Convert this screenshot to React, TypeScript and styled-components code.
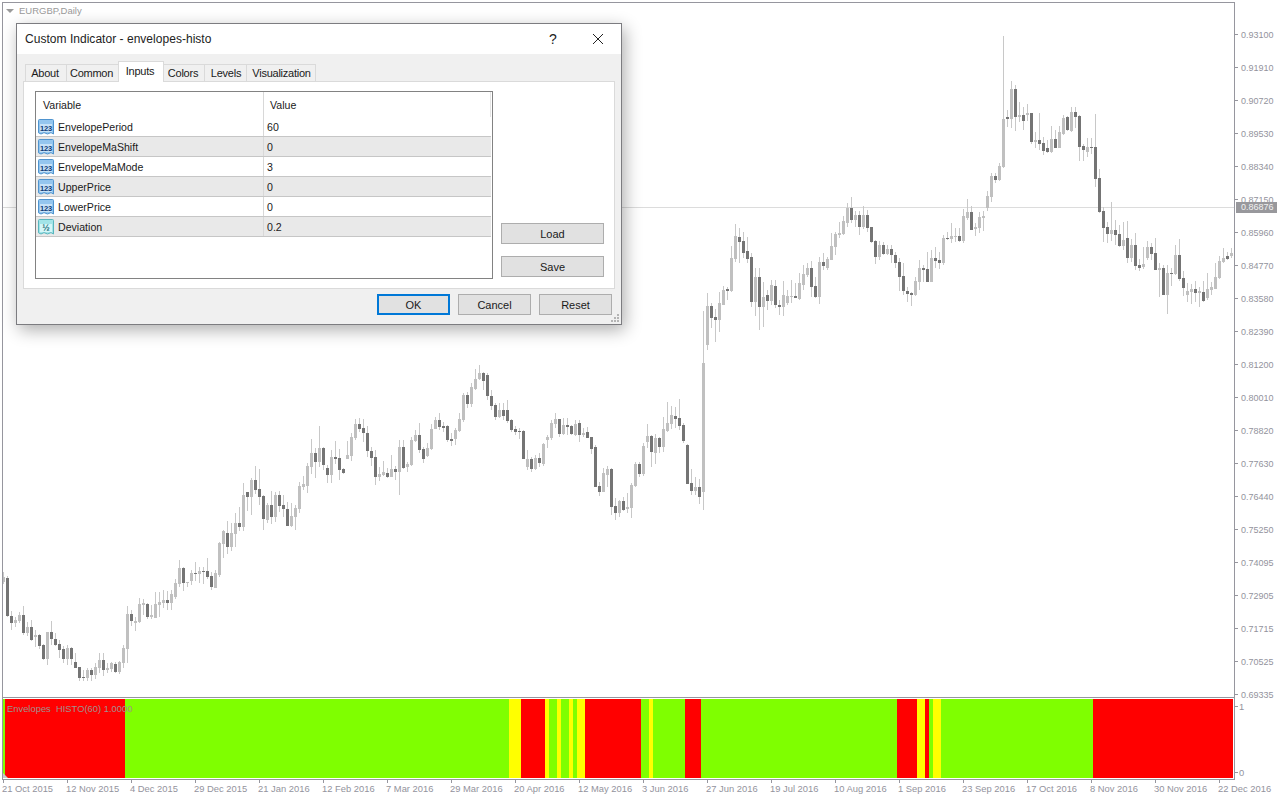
import React from "react";
import styled, { createGlobalStyle } from "styled-components";

const Global = createGlobalStyle`
  html, body { margin: 0; padding: 0; background: #fff; }
  body { font-family: "Liberation Sans", Arial, sans-serif; overflow: hidden; }
`;

type C = [number, number, number, number, number];

const segA: C[] = [
[0,697,732,710,725],[1,708,832,714,828],[1,812,870,828,849],[0,832,860,840,849],[0,815,850,825,843],[1,798,885,825,879],[0,845,888,861,879],[1,840,903,861,900],[0,870,920,885,891],[1,882,927,885,918],
[1,912,960,915,957],[0,875,975,876,957],[1,842,915,876,897],[1,880,918,897,915],[1,900,955,912,930],[1,918,970,927,957],[0,915,975,924,957],[1,920,975,924,957],[1,938,985,966,984],[1,980,1022,981,1014],
[1,990,1022,1011,1014],[0,985,1022,990,1014],[1,985,1022,990,1005],[0,970,1018,981,1005],[0,938,1000,960,984],[1,938,1008,960,990],[0,970,1000,984,990],[0,966,995,969,987],[1,965,1000,972,996],[0,963,1002,966,996],
[0,915,985,924,969],[0,798,968,822,927],[1,810,858,822,843],[0,830,872,843,849],[0,775,848,792,846],[0,777,825,789,795],[1,788,838,792,831],[0,795,838,825,831],[0,756,835,792,834],[0,755,832,786,795],
[0,750,805,780,789],[1,752,810,780,789],[0,750,810,762,789],[0,718,778,729,771],[0,660,742,684,732],[1,682,752,684,729],[0,725,742,726,729],[0,690,735,699,723],[1,666,722,699,702],[0,682,730,693,702],
[1,682,732,693,696],[1,654,718,693,711],[1,695,750,708,741],[0,690,745,699,744],[0,605,710,609,705],[0,570,655,573,612],[1,544,642,579,621],[0,548,632,579,621],[0,520,622,549,582],[1,500,574,549,561],
[0,430,572,465,561],[1,455,512,456,471],[0,415,525,420,471],[1,378,462,420,450],[1,388,495,447,471],[1,465,570,468,537],[0,490,550,495,540],[1,453,552,495,531],[0,455,545,465,531],[1,453,516,465,498],
[1,465,530,495,507],[1,487,558,507,558],[0,490,560,528,558],[0,495,570,504,531],[0,425,520,438,507],[0,408,450,432,441],[0,370,458,378,438],[0,297,402,339,381],[1,325,415,339,366],[0,258,380,324,366],
[1,320,390,324,375],[1,375,430,384,405],[0,330,430,351,405],[1,303,372,351,357],[1,328,420,354,390],[1,385,402,387,399],[0,303,358,345,357],[0,280,362,291,348],[0,237,300,252,294],[1,235,275,252,267],
[1,237,305,264,279],[1,258,350,279,333],[1,322,378,333,354],[1,330,435,351,411],[0,380,423,402,411],[0,362,408,396,405],[1,385,415,399,411],[0,345,412,387,411],[1,378,420,387,396],[0,300,465,321,396],
[1,300,388,321,384],[0,365,395,372,381],[0,290,378,300,375],[0,270,305,285,303],[1,250,340,285,330],[1,320,368,327,357],[0,310,352,324,348],[0,252,330,267,327],[0,230,268,240,267],[1,220,270,240,261],
[1,245,275,258,264],[1,255,305,258,300],[1,278,318,297,303],[0,265,315,270,297],[0,220,275,237,273],[0,158,245,165,240],[1,155,205,165,192],[0,130,200,141,192],[0,86,150,117,147],[0,75,120,99,117],
[1,95,150,99,123],[1,100,180,105,168],[1,150,210,168,198],[1,190,240,195,231],[0,190,235,210,231],[1,190,240,210,228],[1,180,248,210,243],[1,238,275,240,270],[1,258,285,267,276],[1,265,298,273,276],
[1,270,358,273,357],[0,330,390,357,381],[1,352,395,357,387],[0,345,390,354,387],[1,340,380,354,369],[0,310,378,312,372],[0,285,325,291,300],[0,240,300,249,294],[0,220,265,237,252],[1,237,290,237,282],
[0,235,285,255,282],[1,235,285,255,261],[1,255,285,258,282],[0,240,288,252,285],[1,240,305,249,285],[0,265,290,279,285],[1,262,295,276,294],[1,290,342,291,327],[1,315,442,321,441],[1,425,468,438,456],
[0,385,456,399,456],[0,378,440,387,405],[1,385,525,387,501],[1,475,540,498,519],[0,480,530,483,519],[1,472,512,483,510],[0,460,520,501,507],[0,428,535,435,504],[0,365,440,372,438],[1,365,410,372,402],
[0,310,408,318,402],[0,252,325,288,306],[1,285,380,288,336],[0,282,372,294,339],[1,290,338,294,321],[0,232,335,267,321],[0,185,275,249,273],[0,198,268,225,252],[1,200,265,228,237],[1,178,270,234,258],
[1,250,308,255,303],[1,312,432,315,432],[1,388,465,429,453],[0,412,465,441,453],[1,418,492,441,471],[0,-87,510,69,456],
];

const segB: C[] = [
[0,310,480,348,465],[1,340,415,348,384],[1,358,455,381,390],[0,305,425,339,390],[0,288,345,300,345],[1,290,330,297,303],[0,168,305,204,303],[0,102,215,138,207],[1,115,218,141,156],[1,125,205,153,189],
[1,140,220,183,207],[1,190,350,201,336],[0,235,378,261,336],[1,235,420,261,351],[0,275,410,321,351],[1,300,360,315,333],[0,270,345,285,333],[1,270,355,288,345],[1,330,375,345,351],[0,272,378,315,351],
[0,300,345,318,339],[0,270,340,318,321],[1,280,325,318,324],[0,250,330,279,327],[0,225,300,252,285],[0,220,260,234,255],[1,212,320,234,291],[1,260,325,288,321],[0,200,342,216,321],[1,190,240,216,228],
[0,200,240,207,234],[0,130,210,168,210],[0,125,195,132,171],[0,95,145,129,135],[0,78,135,93,132],[0,40,110,54,99],[1,20,100,54,90],[0,62,110,75,90],[1,62,135,75,111],[0,48,118,75,111],
[1,60,125,75,114],[1,110,160,111,156],[1,150,222,153,201],[0,153,210,165,201],[1,155,195,165,192],[0,165,195,177,192],[1,165,218,177,195],[1,185,235,195,219],[1,205,302,216,261],[1,220,315,258,303],
[1,290,335,303,312],[1,305,348,309,315],[0,262,318,273,315],[0,210,300,234,276],[1,225,275,234,240],[1,185,275,237,276],[0,180,275,204,276],[1,170,235,204,213],[1,185,238,210,219],[0,135,225,144,219],
[1,125,150,144,147],[0,98,158,138,147],[0,115,155,138,141],[1,115,155,138,153],
];

const segC: C[] = [
[0,628,728,648,723],[0,597,660,636,654],[1,617,690,636,690],[0,670,708,681,687],[0,635,700,651,684],[0,632,692,648,654],[0,572,632,588,624],[0,518,605,528,591],[1,520,548,528,540],[0,488,543,498,540],
[0,108,505,357,501],[1,330,380,351,357],[0,243,385,267,357],[1,255,392,267,351],[0,305,365,345,351],[1,322,390,345,363],[0,312,362,339,345],[1,338,432,339,426],[0,395,445,420,426],[1,338,450,420,432],
[1,410,465,429,453],[1,420,460,444,456],[0,378,458,417,456],[1,390,445,417,444],[0,378,445,396,444],[0,345,405,354,402],[1,348,392,351,390],[0,322,395,336,393],[1,320,385,336,351],[1,345,483,348,441],
[1,432,483,438,450],[0,415,470,441,456],[1,415,462,441,444],[1,342,560,441,537],[1,508,640,534,636],[1,622,725,633,684],[1,665,730,681,702],[0,605,722,690,702],[1,660,735,690,705],[1,675,740,702,738],
[0,665,750,720,738],[1,664,790,714,774],[0,718,785,735,774],[1,698,810,735,798],[1,778,812,795,804],[0,740,808,792,801],[0,722,780,741,774],[1,728,780,741,762],[1,715,810,759,810],[0,790,890,804,810],
[1,795,885,804,885],[0,795,942,819,885],[1,805,858,819,822],[0,735,825,765,822],[1,718,842,765,837],[1,812,888,834,864],[0,850,905,873,885],[0,852,912,867,876],[1,842,905,867,879],[0,860,920,873,879],
[1,842,905,876,903],[0,820,900,867,894],[0,845,885,861,870],[0,790,868,831,867],[0,768,838,783,834],[0,745,790,774,786],[1,755,780,768,777],[0,745,775,759,768],
];

type Placed = { x: number; dark: boolean; wt: number; wb: number; bt: number; bb: number };
const place = (seg: C[], startX: number, baseY: number): Placed[] =>
  seg.map(([d, wt, wb, bt, bb], i) => ({
    x: startX + i * 4,
    dark: !!d,
    wt: Math.round(baseY + wt / 3),
    wb: Math.round(baseY + wb / 3),
    bt: Math.round(baseY + bt / 3),
    bb: Math.round(baseY + bb / 3),
  }));

const candles: Placed[] = [...place(segA, 3, 340), ...place(segB, 707, 190), ...place(segC, 963, 0)];

const prices = ["0.93100","0.91910","0.90720","0.89530","0.88340","0.87150","0.85960","0.84770","0.83580","0.82390","0.81200","0.80010","0.78820","0.77630","0.76440","0.75250","0.74095","0.72905","0.71715","0.70525","0.69335"];
const dates = ["21 Oct 2015","12 Nov 2015","4 Dec 2015","29 Dec 2015","21 Jan 2016","12 Feb 2016","7 Mar 2016","29 Mar 2016","20 Apr 2016","12 May 2016","3 Jun 2016","27 Jun 2016","19 Jul 2016","10 Aug 2016","1 Sep 2016","23 Sep 2016","17 Oct 2016","8 Nov 2016","30 Nov 2016","22 Dec 2016"];

const G = "#7fff00", R = "#ff0000", Y = "#ffff00";
const hist: [string, number][] = [[G,2],[R,120],[G,384],[Y,12],[R,24],[Y,4],[G,8],[Y,4],[G,8],[Y,4],[G,4],[Y,8],[R,56],[G,8],[Y,4],[G,32],[R,16],[G,196],[R,20],[Y,8],[R,4],[G,4],[Y,8],[G,152],[R,140]];

const inputs = [
  { name: "EnvelopePeriod", value: "60", real: false },
  { name: "EnvelopeMaShift", value: "0", real: false },
  { name: "EnvelopeMaMode", value: "3", real: false },
  { name: "UpperPrice", value: "0", real: false },
  { name: "LowerPrice", value: "0", real: false },
  { name: "Deviation", value: "0.2", real: true },
];
const tabs = ["About", "Common", "Inputs", "Colors", "Levels", "Visualization"];

const Page = styled.div`
  position: relative;
  width: 1280px;
  height: 800px;
  padding: 2px 0 0 2px;
  box-sizing: border-box;
  overflow: hidden;
  background: #fff;
  font-size: 9.4px;
  color: #93939d;
`;
const PaneRow = styled.div`
  display: flex;
`;
const MainPane = styled.div`
  position: relative;
  box-sizing: border-box;
  width: 1233px;
  height: 696px;
  border: 1px solid #96969e;
  background: #fff;
`;
const ChartSvg = styled.svg`
  display: block;
`;
const ChartTitle = styled.div`
  position: absolute;
  left: 3px;
  top: 2px;
  display: flex;
  align-items: center;
  gap: 5px;
  line-height: 11px;
  font-size: 9.5px;
  color: #9a9a9a;
`;
const Caret = styled.span`
  width: 0;
  height: 0;
  border-left: 4px solid transparent;
  border-right: 4px solid transparent;
  border-top: 4px solid #9a9a9a;
`;
const PriceAxis = styled.div`
  position: relative;
  width: 45px;
  height: 696px;
  padding-top: 16px;
  box-sizing: border-box;
  font-size: 9px;
`;
const PriceRow = styled.div`
  display: flex;
  align-items: center;
  height: 33px;
  gap: 3px;
  white-space: nowrap;
`;
const Tick = styled.span`
  width: 3px;
  height: 1px;
  background: #96969e;
`;
const PriceTag = styled.div`
  position: absolute;
  left: 1px;
  top: 200px;
  width: 41px;
  height: 11px;
  padding-left: 5px;
  box-sizing: border-box;
  background: #98989c;
  color: #f2f2f2;
  line-height: 11px;
`;
const SubPane = styled.div`
  position: relative;
  box-sizing: border-box;
  width: 1233px;
  height: 82px;
  padding: 1px 1px 1px 0;
  border-left: 1px solid #96969e;
  border-right: 1px solid #96969e;
  border-bottom: 1px solid #96969e;
`;
const Histogram = styled.div`
  display: flex;
  height: 79px;
`;
const Bar = styled.div<{ $c: string }>`
  background: ${(p) => p.$c};
`;
const SubLabel = styled.div`
  position: absolute;
  left: 4px;
  top: 5px;
  line-height: 12px;
  color: #a0908e;
  white-space: pre;
`;
const CornerMark = styled.div`
  position: absolute;
  left: 0;
  top: 75px;
  width: 5px;
  height: 5px;
  background: #c8c8c8;
  clip-path: polygon(0 0, 100% 100%, 0 100%);
`;
const SubAxis = styled.div`
  display: flex;
  flex-direction: column;
  justify-content: space-between;
  width: 45px;
  height: 80px;
  padding-top: 2px;
  box-sizing: border-box;
`;
const SubRow = styled.div`
  display: flex;
  align-items: center;
  gap: 1px;
  height: 12px;
`;
const DateAxis = styled.div`
  display: grid;
  grid-template-columns: repeat(20, 64px);
  margin-left: 1px;
`;
const DateCell = styled.div`
  display: flex;
  flex-direction: column;
  white-space: nowrap;
`;
const DateTick = styled.span`
  width: 1px;
  height: 3px;
  background: #96969e;
`;
const DateText = styled.span`
  margin: 0 0 0 -1px;
  line-height: 12px;
`;

const Dialog = styled.div`
  position: absolute;
  left: 16px;
  top: 23px;
  box-sizing: border-box;
  width: 606px;
  height: 302px;
  border: 1px solid #7c7c80;
  background: #f0f0f0;
  box-shadow: 3px 5px 16px rgba(0, 0, 0, 0.32);
  color: #1a1a1a;
  font-size: 10.6px;
  display: flex;
  flex-direction: column;
`;
const TitleBar = styled.div`
  display: flex;
  align-items: center;
  height: 30px;
  padding: 0 17px 0 8px;
  background: #fff;
`;
const TitleText = styled.div`
  flex: 1;
  font-size: 12px;
  letter-spacing: 0.03px;
  color: #222;
`;
const Help = styled.span`
  width: 12px;
  margin-right: 33px;
  font-size: 14px;
  text-align: center;
  color: #222;
`;
const Body = styled.div`
  flex: 1;
  display: flex;
  flex-direction: column;
  padding: 7px 6px 0;
`;
const TabRow = styled.div`
  display: flex;
  align-items: flex-end;
  height: 21px;
  margin-left: 3px;
  position: relative;
  z-index: 1;
`;
const Tab = styled.div<{ $active?: boolean; $w: number }>`
  position: relative;
  z-index: ${(p) => (p.$active ? 1 : 0)};
  display: flex;
  align-items: center;
  justify-content: center;
  box-sizing: border-box;
  width: ${(p) => p.$w}px;
  height: ${(p) => (p.$active ? 21 : 18)}px;
  margin-left: -1px;
  padding-bottom: ${(p) => (p.$active ? 2 : 0)}px;
  background: ${(p) => (p.$active ? "#fff" : "#f0f0f0")};
  border: 1px solid #dadada;
  border-bottom: ${(p) => (p.$active ? "none" : "1px solid #dadada")};
  font-size: 11px;
  letter-spacing: -0.25px;
  &:nth-child(-n + 4) {
    padding-right: 2px;
  }
  &:nth-child(n + 5) {
    padding-left: 1px;
  }
`;
const Panel = styled.div`
  box-sizing: border-box;
  display: flex;
  gap: 8px;
  height: 208px;
  margin-top: -1px;
  padding: 9px 10px 0 11px;
  border: 1px solid #dadada;
  background: #fff;
`;
const ListBox = styled.div`
  box-sizing: border-box;
  width: 458px;
  height: 188px;
  border: 1px solid #828282;
  background: #fff;
`;
const ListHead = styled.div`
  display: flex;
  height: 25px;
  margin-right: 1px;
  border-right: 1px solid #e4e4e4;
  align-items: center;
`;
const HeadCell = styled.div<{ $first?: boolean }>`
  box-sizing: border-box;
  display: flex;
  align-items: center;
  height: 100%;
  ${(p) => (p.$first ? "width: 227px; padding-left: 7px;" : "flex: 1; padding-left: 6px; border-left: 1px solid #d8d8d8;")}
`;
const ListRow = styled.div<{ $alt: boolean }>`
  box-sizing: border-box;
  display: flex;
  height: 20px;
  margin-right: 1px;
  border-bottom: 1px solid #c6c6c6;
  background: ${(p) => (p.$alt ? "#e9e9e9" : "#fff")};
`;
const NameCell = styled.div`
  display: flex;
  align-items: center;
  gap: 4px;
  width: 227px;
  padding-left: 2px;
  box-sizing: border-box;
`;
const ValueCell = styled.div`
  flex: 1;
  display: flex;
  align-items: center;
  padding-left: 3px;
  border-left: 1px solid #d8d8d8;
`;
const SideButtons = styled.div`
  display: flex;
  flex-direction: column;
  justify-content: flex-end;
  gap: 12px;
  height: 186px;
`;
const Btn = styled.div<{ $w: number; $primary?: boolean }>`
  box-sizing: border-box;
  display: flex;
  align-items: center;
  justify-content: center;
  width: ${(p) => p.$w}px;
  height: 21px;
  background: #e1e1e1;
  border: ${(p) => (p.$primary ? "2px solid #0078d7" : "1px solid #adadad")};
  font-size: 11px;
  color: #1a1a1a;
`;
const Footer = styled.div`
  display: flex;
  justify-content: flex-end;
  gap: 8px;
  padding: 5px 3px 0 0;
`;
const Grip = styled.svg`
  position: absolute;
  right: 1px;
  bottom: 1px;
`;

const VarIcon: React.FC<{ real: boolean }> = ({ real }) => {
  const fill = real ? "#a2e4e8" : "#94c6ee";
  const edge = real ? "#58b6be" : "#4f94cf";
  const ink = real ? "#1b6e7a" : "#0f3a74";
  return (
    <svg width="16" height="16" viewBox="0 0 16 16">
      <path d="M0.5 1.5 Q0.5 0.5 1.5 0.5 H14.5 Q15.5 0.5 15.5 1.5 V15 L13 13.6 L9.5 15 L6 13.6 L3 15 L0.5 13.8 Z" fill={fill} stroke={edge} />
      <rect x="2" y="5" width="12" height="8" fill={real ? "#d4f6f8" : "#c6e2f8"} />
      <text x="8" y="11.6" textAnchor="middle" fontSize={real ? 9 : 7.5} fontWeight="700" fontFamily="Liberation Sans, sans-serif" fill={ink} letterSpacing="-0.2">
        {real ? "½" : "123"}
      </text>
    </svg>
  );
};

export default function App() {
  return (
    <Page>
      <Global />
      <PaneRow>
        <MainPane>
          <ChartSvg width={1231} height={694} viewBox="3 3 1231 694" shapeRendering="crispEdges">
            <rect x="3" y="207" width="1231" height="1" fill="#dcdcdc" />
            {candles.map((c) => (
              <g key={c.x}>
                <rect x={c.x} y={c.wt} width="1" height={Math.max(1, c.wb - c.wt)} fill="#c8c8c8" />
                <rect x={c.x - 1} y={c.bt} width="3" height={Math.max(1, c.bb - c.bt)} fill={c.dark ? "#747474" : "#c0c0c0"} />
              </g>
            ))}
          </ChartSvg>
          <ChartTitle>
            <Caret />
            EURGBP,Daily
          </ChartTitle>
        </MainPane>
        <PriceAxis>
          {prices.map((p) => (
            <PriceRow key={p}>
              <Tick />
              {p}
            </PriceRow>
          ))}
          <PriceTag>0.86876</PriceTag>
        </PriceAxis>
      </PaneRow>
      <PaneRow>
        <SubPane>
          <Histogram>
            {hist.map(([c, w], i) => (
              <Bar key={i} $c={c} style={{ width: w }} />
            ))}
          </Histogram>
          <SubLabel>{"Envelopes  HISTO(60) 1.0000"}</SubLabel>
          <CornerMark />
        </SubPane>
        <SubAxis>
          <SubRow><Tick />1</SubRow>
          <SubRow><Tick />0</SubRow>
        </SubAxis>
      </PaneRow>
      <DateAxis>
        {dates.map((d) => (
          <DateCell key={d}>
            <DateTick />
            <DateText>{d}</DateText>
          </DateCell>
        ))}
      </DateAxis>

      <Dialog>
        <TitleBar>
          <TitleText>Custom Indicator - envelopes-histo</TitleText>
          <Help>?</Help>
          <svg width="12" height="12" viewBox="0 0 12 12">
            <path d="M1 1 L11 11 M11 1 L1 11" stroke="#222" strokeWidth="1" fill="none" />
          </svg>
        </TitleBar>
        <Body>
          <TabRow>
            {tabs.map((t, i) => (
              <Tab key={t} $active={t === "Inputs"} $w={[42, 53, 46, 42, 43, 70][i]}>
                {t}
              </Tab>
            ))}
          </TabRow>
          <Panel>
            <ListBox>
              <ListHead>
                <HeadCell $first>Variable</HeadCell>
                <HeadCell>Value</HeadCell>
              </ListHead>
              {inputs.map((r, i) => (
                <ListRow key={r.name} $alt={i % 2 === 1}>
                  <NameCell>
                    <VarIcon real={r.real} />
                    {r.name}
                  </NameCell>
                  <ValueCell>{r.value}</ValueCell>
                </ListRow>
              ))}
            </ListBox>
            <SideButtons>
              <Btn $w={103}>Load</Btn>
              <Btn $w={103}>Save</Btn>
            </SideButtons>
          </Panel>
          <Footer>
            <Btn $w={73} $primary>OK</Btn>
            <Btn $w={73}>Cancel</Btn>
            <Btn $w={73}>Reset</Btn>
          </Footer>
        </Body>
        <Grip width="10" height="10" viewBox="0 0 10 10">
          <g fill="#b4b4b4">
            <rect x="7" y="1" width="2" height="2" />
            <rect x="4" y="4" width="2" height="2" />
            <rect x="7" y="4" width="2" height="2" />
            <rect x="1" y="7" width="2" height="2" />
            <rect x="4" y="7" width="2" height="2" />
            <rect x="7" y="7" width="2" height="2" />
          </g>
        </Grip>
      </Dialog>
    </Page>
  );
}
